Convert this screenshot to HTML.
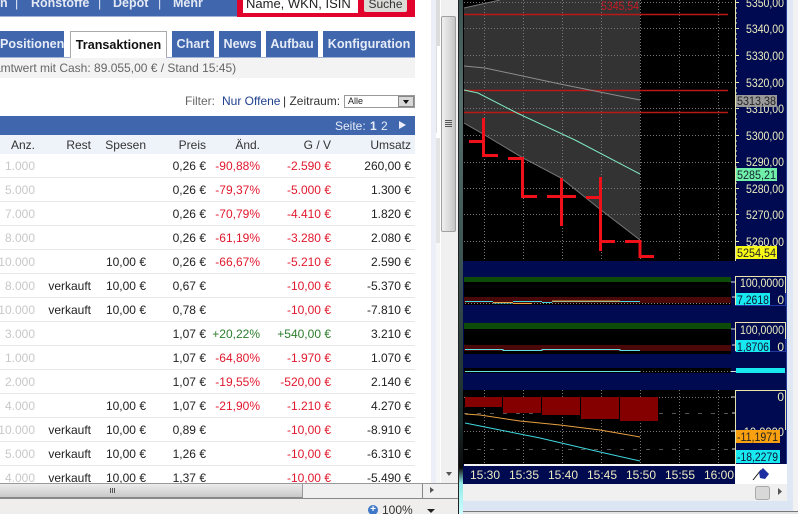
<!DOCTYPE html>
<html lang="de"><head><meta charset="utf-8"><title>Transaktionen</title>
<style>
html,body{margin:0;padding:0;background:#fff}
#p{position:relative;width:798px;height:514px;overflow:hidden;font:12px/14px "Liberation Sans",Arial,sans-serif;color:#222;background:#fff}
.a{position:absolute}
.nav{color:#e4e9f4;font-weight:bold;font-size:12.5px;top:-4px;white-space:nowrap}
.tab{position:absolute;top:31px;height:26px;background:#4066ae;color:#e6ecf7;font-weight:bold;font-size:12.6px;line-height:26px;text-align:center;white-space:nowrap;overflow:hidden}
.r{position:absolute;left:0;width:415px;height:23px;border-bottom:1px solid #e6e6e6}
.r span,.h span{position:absolute;top:5px;text-align:right;white-space:nowrap}
.c1{left:-20px;width:55px;color:#c8c8c8}
.c2{left:30px;width:61px;color:#222}
.c3{left:90px;width:56px;color:#222}
.c4{left:150px;width:56px;color:#222}
.c5{left:200px;width:60px;color:#e0182d}
.c6{left:250px;width:81px;color:#e0182d}
.c7{left:330px;width:81px;color:#222}
.r .g{color:#2c7d2c}
.h{position:absolute;left:0;top:135px;width:415px;height:19px;background:#eef3f9}
.h span{top:3px;color:#333}
svg text{font-family:"Liberation Sans",Arial,sans-serif;font-size:12px}
</style></head><body><div id="p">

<!-- header -->
<div class="a" style="left:0;top:0;width:237px;height:16px;background:#4066ae;border-bottom:1px solid #9fb2d6"></div>
<div class="a" style="left:237px;top:0;width:178px;height:17px;background:#e2032c"></div>
<div class="a nav" style="left:0">n</div>
<div class="a nav" style="left:15px;font-weight:normal">|</div>
<div class="a nav" style="left:31px">Rohstoffe</div>
<div class="a nav" style="left:98px;font-weight:normal">|</div>
<div class="a nav" style="left:113px">Depot</div>
<div class="a nav" style="left:158px;font-weight:normal">|</div>
<div class="a nav" style="left:173px">Mehr</div>
<div class="a" style="left:243px;top:-2px;width:115px;height:15px;background:#fff;color:#222;font-size:13px;line-height:12px;padding-left:3px;box-sizing:border-box;white-space:nowrap">Name, WKN, ISIN</div>
<div class="a" style="left:364px;top:-2px;width:43px;height:14px;background:#dcdad6;border-radius:2px;color:#333;font-size:12px;line-height:12px;text-align:center">Suche</div>

<!-- tabs -->
<div class="tab" style="left:0;width:64px;text-align:right;padding-right:4px;box-sizing:border-box">Positionen</div>
<div class="tab" style="left:70px;width:97px;height:27px;background:#fff;color:#111;border:1px solid #aaa;border-bottom:none;box-sizing:border-box;line-height:27px">Transaktionen</div>
<div class="tab" style="left:172px;width:42px">Chart</div>
<div class="tab" style="left:219px;width:42px">News</div>
<div class="tab" style="left:266px;width:52px">Aufbau</div>
<div class="tab" style="left:323px;width:92px">Konfiguration</div>
<div class="a" style="left:0;top:57px;width:70px;height:1px;background:#9fb2d6"></div>
<div class="a" style="left:167px;top:57px;width:248px;height:1px;background:#9fb2d6"></div>
<div class="a" style="left:0;top:58px;width:415px;height:20px;background:#f3f3f3"></div>
<div class="a" style="left:-28px;top:61px;color:#666;white-space:nowrap">Gesamtwert mit Cash: 89.055,00 € / Stand 15:45)</div>

<!-- filter -->
<div class="a" style="left:185px;top:94px;color:#666;white-space:nowrap">Filter:</div>
<div class="a" style="left:222px;top:94px;color:#1f3f8f;white-space:nowrap">Nur Offene</div>
<div class="a" style="left:283px;top:94px;color:#333;white-space:nowrap">| Zeitraum:</div>
<div class="a" style="left:344px;top:95px;width:71px;height:13px;border:1px solid #999;box-sizing:border-box;background:#fff;font-size:9px;line-height:11px;padding-left:3px;color:#222">Alle</div>
<div class="a" style="left:398px;top:96px;width:16px;height:11px;background:#d8d8d8;border:1px solid #888;box-sizing:border-box"></div>
<div class="a" style="left:403px;top:100px;width:0;height:0;border:3px solid transparent;border-top:4px solid #111;border-bottom:0"></div>

<!-- blue pager -->
<div class="a" style="left:0;top:116px;width:415px;height:19px;background:#4066ae"></div>
<div class="a" style="left:335px;top:119px;color:#e6ecf7;white-space:nowrap;word-spacing:1px">Seite: <b>1</b> 2</div>
<div class="a" style="left:399px;top:121px;width:0;height:0;border:4.5px solid transparent;border-left:7px solid #eef;border-right:0"></div>

<div class="h"><span class="c1">Anz.</span><span class="c2">Rest</span><span class="c3">Spesen</span><span class="c4">Preis</span><span class="c5">Änd.</span><span class="c6">G / V</span><span class="c7">Umsatz</span></div>

<div class="r" style="top:154px"><span class="c1">1.000</span><span class="c4">0,26 €</span><span class="c5">-90,88%</span><span class="c6">-2.590 €</span><span class="c7">260,00 €</span></div>
<div class="r" style="top:178px"><span class="c1">5.000</span><span class="c4">0,26 €</span><span class="c5">-79,37%</span><span class="c6">-5.000 €</span><span class="c7">1.300 €</span></div>
<div class="r" style="top:202px"><span class="c1">7.000</span><span class="c4">0,26 €</span><span class="c5">-70,79%</span><span class="c6">-4.410 €</span><span class="c7">1.820 €</span></div>
<div class="r" style="top:226px"><span class="c1">8.000</span><span class="c4">0,26 €</span><span class="c5">-61,19%</span><span class="c6">-3.280 €</span><span class="c7">2.080 €</span></div>
<div class="r" style="top:250px"><span class="c1">10.000</span><span class="c3">10,00 €</span><span class="c4">0,26 €</span><span class="c5">-66,67%</span><span class="c6">-5.210 €</span><span class="c7">2.590 €</span></div>
<div class="r" style="top:274px"><span class="c1">8.000</span><span class="c2">verkauft</span><span class="c3">10,00 €</span><span class="c4">0,67 €</span><span class="c6">-10,00 €</span><span class="c7">-5.370 €</span></div>
<div class="r" style="top:298px"><span class="c1">10.000</span><span class="c2">verkauft</span><span class="c3">10,00 €</span><span class="c4">0,78 €</span><span class="c6">-10,00 €</span><span class="c7">-7.810 €</span></div>
<div class="r" style="top:322px"><span class="c1">3.000</span><span class="c4">1,07 €</span><span class="c5 g">+20,22%</span><span class="c6 g">+540,00 €</span><span class="c7">3.210 €</span></div>
<div class="r" style="top:346px"><span class="c1">1.000</span><span class="c4">1,07 €</span><span class="c5">-64,80%</span><span class="c6">-1.970 €</span><span class="c7">1.070 €</span></div>
<div class="r" style="top:370px"><span class="c1">2.000</span><span class="c4">1,07 €</span><span class="c5">-19,55%</span><span class="c6">-520,00 €</span><span class="c7">2.140 €</span></div>
<div class="r" style="top:394px"><span class="c1">4.000</span><span class="c3">10,00 €</span><span class="c4">1,07 €</span><span class="c5">-21,90%</span><span class="c6">-1.210 €</span><span class="c7">4.270 €</span></div>
<div class="r" style="top:418px"><span class="c1">10.000</span><span class="c2">verkauft</span><span class="c3">10,00 €</span><span class="c4">0,89 €</span><span class="c6">-10,00 €</span><span class="c7">-8.910 €</span></div>
<div class="r" style="top:442px"><span class="c1">5.000</span><span class="c2">verkauft</span><span class="c3">10,00 €</span><span class="c4">1,26 €</span><span class="c6">-10,00 €</span><span class="c7">-6.310 €</span></div>
<div class="r" style="top:466px"><span class="c1">4.000</span><span class="c2">verkauft</span><span class="c3">10,00 €</span><span class="c4">1,37 €</span><span class="c6">-10,00 €</span><span class="c7">-5.490 €</span></div>

<!-- vertical scrollbars -->
<div class="a" style="left:431px;top:0;width:5px;height:483px;background:#eceef8"></div>
<div class="a" style="left:436px;top:0;width:5px;height:133px;background:#fff;border-left:1px solid #ddd;box-sizing:border-box"></div>
<div class="a" style="left:436px;top:0;width:4px;height:46px;background:#dcdcdc"></div>
<div class="a" style="left:436px;top:138px;width:4px;height:105px;background:#e4e4e4"></div>
<div class="a" style="left:436px;top:243px;width:4px;height:240px;background:#f6f6f6"></div>
<div class="a" style="left:441px;top:0;width:18px;height:499px;background:#f0f0f0"></div>
<div class="a" style="left:441px;top:16px;width:15px;height:216px;box-sizing:border-box;border:1px solid #a0a0a0;border-radius:2px;background:linear-gradient(90deg,#f0f0f0,#d8d8d8 60%,#c4c4c4)"></div>
<div class="a" style="left:445px;top:120px;width:7px;height:1px;background:#555;box-shadow:0 2px #555,0 4px #555,0 6px #555"></div>
<div class="a" style="left:446px;top:472px;width:0;height:0;border:3.5px solid transparent;border-top:4px solid #555;border-bottom:0"></div>

<!-- horizontal scrollbar -->
<div class="a" style="left:0;top:483px;width:458px;height:16px;background:#f0f0f0;border-top:1px solid #999;border-bottom:1px solid #888;box-sizing:border-box"></div>
<div class="a" style="left:0;top:484px;width:303px;height:14px;box-sizing:border-box;border-right:1px solid #999;border-bottom:1px solid #888;background:linear-gradient(#ececec,#c8c8c8)"></div>
<div class="a" style="left:110px;top:488px;width:1px;height:5px;background:#555;box-shadow:2px 0 #555,4px 0 #555"></div>
<div class="a" style="left:422px;top:484px;width:1px;height:14px;background:#888"></div>
<div class="a" style="left:430px;top:487px;width:0;height:0;border:3.5px solid transparent;border-left:4px solid #555;border-right:0"></div>

<!-- status bar -->
<div class="a" style="left:0;top:499px;width:458px;height:15px;background:#f0eeec"></div>
<div class="a" style="left:368px;top:505px;width:10px;height:10px;border-radius:50%;background:#3f78c8;color:#fff;font:bold 10px/10px 'Liberation Sans',sans-serif;text-align:center">+</div>
<div class="a" style="left:382px;top:503px;color:#333;white-space:nowrap">100%</div>
<div class="a" style="left:427px;top:509px;width:0;height:0;border:4px solid transparent;border-top:4px solid #222;border-bottom:0"></div>

<!-- window separator -->
<div class="a" style="left:458px;top:0;width:5px;height:514px;background:linear-gradient(#3c5454,#587070 20%,#3c5454 50%,#1a2a2a 82%,#0a0a0a 91%,#90e8e8 94%,#d0ffff);border-left:1px solid #222;box-sizing:border-box"></div>

<!-- chart -->
<svg class="a" style="left:463px;top:0" width="335" height="514" viewBox="463 0 335 514" xmlns="http://www.w3.org/2000/svg">
<rect x="463" y="0" width="335" height="514" fill="#e0e8f6"/>
<rect x="463" y="0" width="272" height="261" fill="#000"/>
<polygon points="464,8 500,0 640,0 640,240 601,210 561,178 523,158 483,134 464,123" fill="#333"/>
<polyline points="464,123 483,134 523,158 561,178 601,210 640,240" fill="none" stroke="#777" stroke-width="1"/>
<polyline points="464,8 500,0" fill="none" stroke="#777"/>
<g stroke="#777" stroke-width="1" stroke-dasharray="1 2">
<path d="M484.5 0V261M523.5 0V261M562.5 0V261M601.5 0V261M640.5 0V261M679.5 0V261M718.5 0V261"/>
<path d="M464 2.5H732M464 28.5H732M464 55.5H732M464 82.5H732M464 108.5H732M464 135.5H732M464 162.5H732M464 188.5H732M464 214.5H732M464 241.5H732"/>
</g>
<text x="601" y="10" textLength="38" lengthAdjust="spacingAndGlyphs" fill="#c01c24">5345,54</text>
<path d="M464 14.5H728M464 90.5H728M464 112.5H728" stroke="#b81818" stroke-width="1.4" fill="none"/>
<polyline points="464,66 485,68 560,84 640,100" fill="none" stroke="#8c8c8c" stroke-width="1"/>
<polyline points="464,90 478,93 517,113 575,140 640,174" fill="none" stroke="#7fe8c0" stroke-width="1"/>
<g fill="none" stroke="#f0101a" stroke-width="3">
<path d="M469 141.5H483.5M483.5 118V155.5H498"/>
<path d="M508 158.5H522.5V196.5H537"/>
<path d="M547 196.5H576M561.5 178V226"/>
<path d="M586 197.5H600.5M600.5 177V251M600.5 241.5H615"/>
<path d="M625 241.5H640V256.5H654"/>
</g>

<!-- main axis -->
<rect x="735" y="0" width="51" height="464" fill="#000a50"/>
<rect x="786" y="0" width="1" height="500" fill="#223a9a"/>
<path d="M735.5 0V261" stroke="#e8e4b0"/>
<path d="M735 2.5h4M735 28.5h4M735 55.5h4M735 82.5h4M735 108.5h4M735 135.5h4M735 162.5h4M735 188.5h4M735 214.5h4M735 241.5h4" stroke="#e8e4b0"/>
<path d="M735 8h2M735 13h2M735 18h2M735 23h2M735 34h2M735 39h2M735 44h2M735 49h2M735 61h2M735 66h2M735 71h2M735 76h2M735 88h2M735 93h2M735 98h2M735 103h2M735 114h2M735 119h2M735 124h2M735 129h2M735 141h2M735 146h2M735 151h2M735 156h2M735 167h2M735 172h2M735 177h2M735 183h2M735 194h2M735 199h2M735 204h2M735 209h2M735 220h2M735 225h2M735 230h2M735 236h2M735 247h2M735 252h2" stroke="#e8e4b0"/>
<g fill="#ecebc0">
<text x="746" y="7" textLength="38" lengthAdjust="spacingAndGlyphs">5350,00</text>
<text x="746" y="33" textLength="38" lengthAdjust="spacingAndGlyphs">5340,00</text>
<text x="746" y="60" textLength="38" lengthAdjust="spacingAndGlyphs">5330,00</text>
<text x="746" y="87" textLength="38" lengthAdjust="spacingAndGlyphs">5320,00</text>
<text x="746" y="113" textLength="38" lengthAdjust="spacingAndGlyphs">5310,00</text>
<text x="746" y="140" textLength="38" lengthAdjust="spacingAndGlyphs">5300,00</text>
<text x="746" y="166" textLength="38" lengthAdjust="spacingAndGlyphs">5290,00</text>
<text x="746" y="193" textLength="38" lengthAdjust="spacingAndGlyphs">5280,00</text>
<text x="746" y="219" textLength="38" lengthAdjust="spacingAndGlyphs">5270,00</text>
<text x="746" y="246" textLength="38" lengthAdjust="spacingAndGlyphs">5260,00</text>
</g>
<rect x="736" y="95" width="41" height="12" fill="#9a9a9a"/><text x="737" y="105" textLength="39" lengthAdjust="spacingAndGlyphs" fill="#222">5313,38</text>
<rect x="736" y="168" width="41" height="13" fill="#70f0a8"/><text x="737" y="179" textLength="39" lengthAdjust="spacingAndGlyphs" fill="#123">5285,21</text>
<rect x="736" y="246" width="41" height="13" fill="#f8f818"/><text x="737" y="257" textLength="39" lengthAdjust="spacingAndGlyphs" fill="#222">5254,54</text>

<!-- navy panels -->
<rect x="463" y="261" width="272" height="129" fill="#000a50"/>
<rect x="735" y="261" width="51" height="129" fill="#000a50"/>
<rect x="464" y="277" width="267" height="28" fill="#000"/>
<rect x="464" y="277" width="267" height="5" fill="#0c4c08"/>
<rect x="464" y="297" width="267" height="6" fill="#4a0808"/>
<path d="M465 303.5H731" stroke="#888" stroke-dasharray="1 2"/>
<path d="M465 301.5H493M493 303H513M513 301.5H542M542 302.5H552M552 301.5H620M620 301.5H640" stroke="#40d8e0" fill="none"/>
<path d="M493 302.5H513M513 303.5H532M552 301H620" stroke="#e8a040" fill="none"/>
<rect x="464" y="323" width="267" height="31" fill="#000"/>
<rect x="464" y="323" width="267" height="6" fill="#0c4c08"/>
<rect x="464" y="345" width="267" height="6" fill="#4a0808"/>
<path d="M465 349.5H503V350.5H542V349.5H620V350.5H640" stroke="#60e0e8" fill="none"/>
<rect x="464" y="368" width="267" height="5" fill="#000"/>
<path d="M465 371.5H640" stroke="#60e0d8"/>
<path d="M640 371.5H731" stroke="#777" stroke-dasharray="1 2"/>
<g fill="none" stroke="#e8e4b0"><path d="M735.5 276V306M735 276.5H785M785.5 276V293"/><path d="M735.5 322V352M735 322.5H785M785.5 322V339"/></g>
<path d="M735 305.5H786M785.5 293V305M735 351.5H786M785.5 339V351" stroke="#2038a0" fill="none"/>
<path d="M731 282h4M732 297h3M731 329h4M732 345h3M731 371.5h5" stroke="#ddd"/>
<text x="740" y="287" textLength="44" lengthAdjust="spacingAndGlyphs" fill="#ecebc0">100,0000</text>
<text x="784" y="304" fill="#ecebc0" text-anchor="end">0</text>
<rect x="736" y="293" width="34" height="12" fill="#18e8f0"/><text x="737" y="304" textLength="32" lengthAdjust="spacingAndGlyphs" fill="#113">7,2618</text>
<text x="740" y="334" textLength="44" lengthAdjust="spacingAndGlyphs" fill="#ecebc0">100,0000</text>
<text x="784" y="351" fill="#ecebc0" text-anchor="end">0</text>
<rect x="736" y="340" width="34" height="12" fill="#18e8f0"/><text x="737" y="351" textLength="32" lengthAdjust="spacingAndGlyphs" fill="#113">1,8706</text>
<rect x="736" y="368" width="49" height="5" fill="#18e8f0"/>

<!-- lower panel -->
<rect x="463" y="390" width="272" height="74" fill="#000"/>
<path d="M484.5 390V464M523.5 390V464M562.5 390V464M601.5 390V464M640.5 390V464M679.5 390V464M718.5 390V464" stroke="#777" stroke-dasharray="1 2"/>
<path d="M464 431.5H732" stroke="#777" stroke-dasharray="1 2"/>
<path d="M464 397.5H732" stroke="#777" stroke-dasharray="1 2"/>
<path d="M464 413.5H732M464 449.5H732" stroke="#555" stroke-dasharray="4 9"/>
<g fill="#840000">
<rect x="465" y="397" width="37" height="10"/><rect x="503" y="397" width="38" height="16"/><rect x="542" y="397" width="38" height="18"/><rect x="581" y="397" width="38" height="22"/><rect x="620" y="397" width="38" height="24"/>
</g>
<polyline points="465,414 480,415 520,421 560,425 600,430 640,437" fill="none" stroke="#e8a040"/>
<polyline points="465,423 500,430 540,438 600,452 640,461" fill="none" stroke="#40d8e0"/>
<rect x="735" y="390" width="51" height="74" fill="#000a50"/>
<path d="M735.5 390V464M735 390.5H785M785.5 390V430" stroke="#e8e4b0" fill="none"/>
<path d="M731 397h4M732 413h3M731 431h4M732 449h3" stroke="#ddd"/>
<text x="784" y="401" fill="#ecebc0" text-anchor="end">0</text>
<text x="740" y="436" textLength="44" lengthAdjust="spacingAndGlyphs" fill="#ecebc0">-10,0000</text>
<rect x="736" y="430" width="44" height="13" fill="#f8a010"/><text x="737" y="441" textLength="41" lengthAdjust="spacingAndGlyphs" fill="#222">-11,1971</text>
<rect x="736" y="450" width="44" height="13" fill="#18e8f0"/><text x="737" y="461" textLength="41" lengthAdjust="spacingAndGlyphs" fill="#113">-18,2279</text>

<!-- time axis -->
<rect x="463" y="464" width="272" height="20" fill="#000a50"/>
<rect x="464" y="464" width="271" height="2" fill="#f4f4f4"/>
<g fill="#ecebc0" text-anchor="middle">
<text x="485" y="479">15:30</text><text x="524" y="479">15:35</text><text x="563" y="479">15:40</text><text x="602" y="479">15:45</text><text x="641" y="479">15:50</text><text x="680" y="479">15:55</text><text x="719" y="479">16:00</text>
</g>
<rect x="735" y="464" width="52" height="20" fill="#fff"/>
<path d="M753 480L761 470" stroke="#111" stroke-width="1"/>
<polygon points="759,472 763,468 769,474 765,479 760,478" fill="#1c2ea0"/>

<!-- chart bottom scrollbar -->
<rect x="463" y="484" width="324" height="17" fill="#f0f0f0"/>
<rect x="755.5" y="486.5" width="14" height="13" rx="2" fill="#d8d8d8" stroke="#aaa"/>
<polygon points="778,488 778,495 782,491.5" fill="#555"/>
<rect x="463" y="501" width="330" height="9" fill="#dbe5f4"/>
<rect x="463" y="511" width="335" height="1" fill="#777"/>
<rect x="463" y="512" width="335" height="2" fill="#e4e4e4"/>
<rect x="793" y="0" width="5" height="511" fill="#f2f2f2"/>
</svg>
</div></body></html>
